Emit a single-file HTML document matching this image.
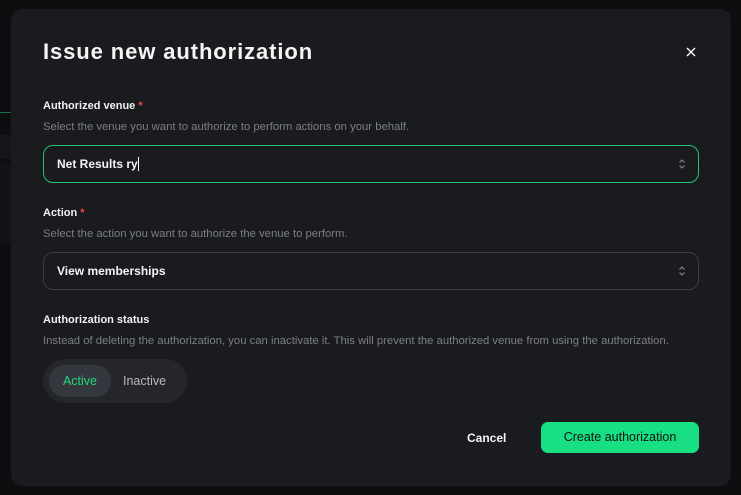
<!DOCTYPE html>
<html><head><meta charset="utf-8"><style>
*{box-sizing:border-box;margin:0;padding:0}
body{width:741px;height:495px;background:#0d0e10;font-family:"Liberation Sans",sans-serif;position:relative;overflow:hidden;color:#fff}
.bg{position:absolute;left:0;top:0;width:11px;height:495px}
.modal{position:absolute;left:11px;top:9px;width:720px;height:477px;background:#1a1b1f;border-radius:11px}
.t{position:absolute;left:32px;top:30px;font-size:22px;font-weight:bold;letter-spacing:0.9px;color:#f4f4f5}
.x{position:absolute;left:675px;top:38px}
.lbl{position:absolute;left:32px;font-size:11px;font-weight:bold;color:#f1f1f2}
.lbl span{color:#e5484d}
.desc{position:absolute;left:32px;font-size:11.3px;color:#7c7f87}
.inp{position:absolute;left:32px;width:656px;height:38px;border-radius:10px;border:1px solid #3a3c42;font-size:12px;font-weight:bold;padding:0 0 0 13px;line-height:36px;color:#f4f4f5}
.inp svg{position:absolute;right:12px;top:12px}
.seg{position:absolute;left:32px;top:350px;width:144px;height:44px;border-radius:22px;background:#24262a}
.act{position:absolute;left:6px;top:6px;width:62px;height:32px;border-radius:16px;background:#34373d;color:#22d67a;font-size:12.5px;text-align:center;line-height:32px}
.ina{position:absolute;left:80px;top:6px;line-height:32px;font-size:12.5px;color:#b6b8bd}
.cancel{position:absolute;left:456px;top:422px;font-size:12px;font-weight:bold;color:#f4f4f5}
.btn{position:absolute;left:530px;top:413px;width:158px;height:31px;border-radius:7px;background:#17df82;color:#101113;font-size:12.5px;text-align:center;line-height:31px}
</style></head><body>
<div class="bg">
<div style="position:absolute;left:0;top:112px;width:11px;height:1px;background:#1f6b47"></div>
<div style="position:absolute;left:0;top:135px;width:11px;height:24px;background:#15161a"></div>
<div style="position:absolute;left:0;top:163px;width:11px;height:40px;background:#121316"></div>
<div style="position:absolute;left:0;top:204px;width:11px;height:40px;background:#121316"></div>
</div>
<div class="modal">
<div class="t">Issue new authorization</div>
<svg class="x" width="10" height="10" viewBox="0 0 10 10"><path d="M1 1L9 9M9 1L1 9" stroke="#fff" stroke-width="1.4"/></svg>
<div class="lbl" style="top:91px">Authorized venue <span>*</span></div>
<div class="desc" style="top:112px">Select the venue you want to authorize to perform actions on your behalf.</div>
<div class="inp" style="top:136px;border-color:#22c46f">Net Results ry<span style="display:inline-block;width:1px;height:14px;background:#fff;vertical-align:-3px"></span><svg width="8" height="12" viewBox="0 0 8 12"><path d="M1.5 4.5L4 2L6.5 4.5M1.5 7.5L4 10L6.5 7.5" fill="none" stroke="#8a8d94" stroke-width="1"/></svg></div>
<div class="lbl" style="top:198px">Action <span>*</span></div>
<div class="desc" style="top:219px">Select the action you want to authorize the venue to perform.</div>
<div class="inp" style="top:243px">View memberships<svg width="8" height="12" viewBox="0 0 8 12"><path d="M1.5 4.5L4 2L6.5 4.5M1.5 7.5L4 10L6.5 7.5" fill="none" stroke="#8a8d94" stroke-width="1"/></svg></div>
<div class="lbl" style="top:305px">Authorization status</div>
<div class="desc" style="top:326px">Instead of deleting the authorization, you can inactivate it. This will prevent the authorized venue from using the authorization.</div>
<div class="seg"><div class="act">Active</div><div class="ina">Inactive</div></div>
<div class="cancel">Cancel</div>
<div class="btn">Create authorization</div>
</div>
</body></html>
